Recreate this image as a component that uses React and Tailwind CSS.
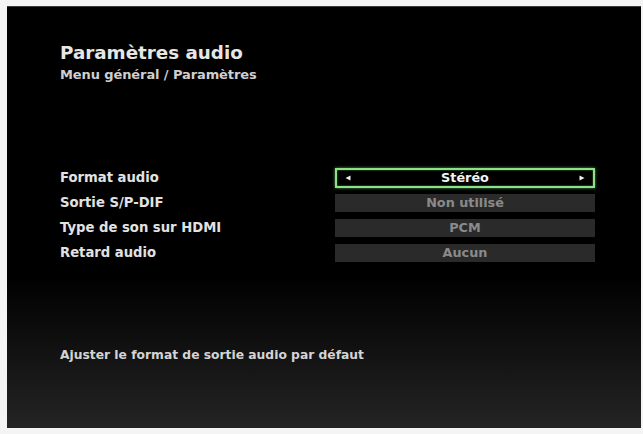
import React from 'react';

const rows = [
  { label: 'Format audio', value: 'Stéréo', active: true },
  { label: 'Sortie S/P-DIF', value: 'Non utilisé' },
  { label: 'Type de son sur HDMI', value: 'PCM' },
  { label: 'Retard audio', value: 'Aucun' },
];

function Arrow({ dir }) {
  return (
    <svg width="6" height="6" viewBox="0 0 6 6" className="shrink-0">
      {dir === 'left' ? (
        <polygon points="5.5,0.5 5.5,5.5 0.5,3" fill="#f2f2f2" />
      ) : (
        <polygon points="0.5,0.5 0.5,5.5 5.5,3" fill="#f2f2f2" />
      )}
    </svg>
  );
}

export default function App() {
  return (
    <div
      className="w-[643px] h-[434px] bg-[#f4f4f4] pt-[6px] pl-[7px] pr-[2px] pb-[6px]"
      style={{ fontFamily: '"DejaVu Sans", "Liberation Sans", sans-serif' }}
    >
      <div className="h-full w-full flex flex-col bg-[linear-gradient(to_bottom,#000_0%,#000_64%,#242424_100%)] border-t border-[#3a3a3a] pl-[53px]">
        {/* Header */}
        <div className="mt-[36px] text-[18.3px] leading-[20px] font-bold text-[#e6e6e6]">
          Paramètres audio
        </div>
        <div className="mt-[5px] text-[13px] leading-[14px] font-bold text-[#cfcfcf] tracking-[-0.1px]">
          Menu général / Paramètres
        </div>

        {/* Settings list */}
        <div className="mt-[86px] flex flex-col gap-[5px]">
          {rows.map((row) => (
            <div key={row.label} className="flex items-center h-[20px]">
              <div className="w-[275px] text-[13.2px] font-bold text-[#e2e2e2]">
                {row.label}
              </div>
              {row.active ? (
                <div className="w-[260px] h-[20px] flex items-center justify-between px-[8px] border-2 border-[#8ee08a] bg-black shadow-[0_0_3px_#4c9a4a,inset_0_0_2px_#4c9a4a]">
                  <Arrow dir="left" />
                  <span className="text-[12.8px] leading-none font-bold text-[#f4f4f4]">{row.value}</span>
                  <Arrow dir="right" />
                </div>
              ) : (
                <div className="w-[260px] h-[18px] flex items-center justify-center bg-[#2a2a2a] text-[12.8px] leading-none font-bold text-[#8a8a8a]">
                  {row.value}
                </div>
              )}
            </div>
          ))}
        </div>

        {/* Help text */}
        <div className="mt-[85px] text-[12.3px] leading-[14px] font-bold text-[#d4d4d4]">
          Ajuster le format de sortie audio par défaut
        </div>
      </div>
    </div>
  );
}
